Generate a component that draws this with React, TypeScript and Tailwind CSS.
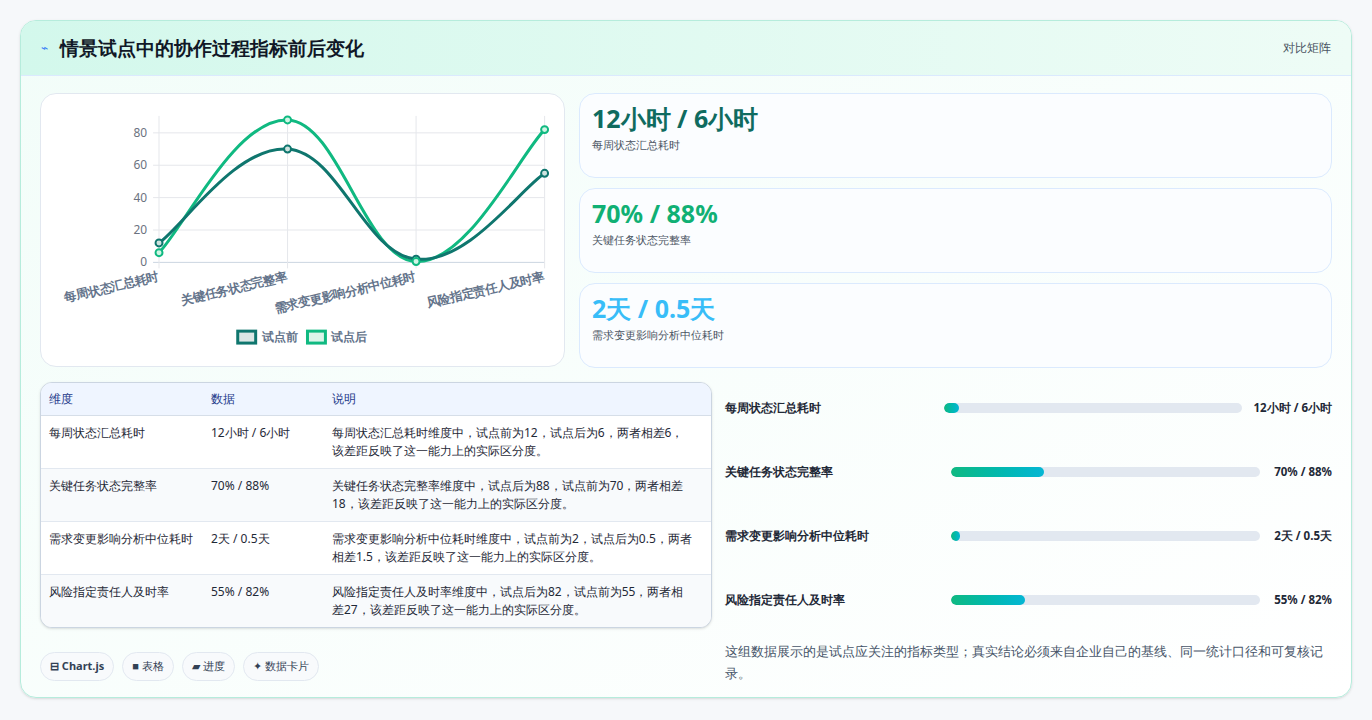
import React from "react";

const xs = [158, 287, 416, 545];
const yOf = (v: number) => 262 - 1.625 * v;

function curve(vals: number[]) {
    const p = vals.map((v, i) => [xs[i], yOf(v)]);
    const t = 0.4;
    let d = `M${p[0][0]},${p[0][1]}`;
    for (let i = 0; i < p.length - 1; i++) {
        const p0 = p[i - 1] || p[i];
        const p1 = p[i];
        const p2 = p[i + 1];
        const p3 = p[i + 2] || p2;
        const c1x = p1[0] + ((p2[0] - p0[0]) * t) / 2;
        const c1y = p1[1] + ((p2[1] - p0[1]) * t) / 2;
        const c2x = p2[0] - ((p3[0] - p1[0]) * t) / 2;
        const c2y = p2[1] - ((p3[1] - p1[1]) * t) / 2;
        d += ` C${c1x},${c1y} ${c2x},${c2y} ${p2[0]},${p2[1]}`;
    }
    return d;
}

const before = [12, 70, 2, 55];
const after = [6, 88, 0.5, 82];
const labels = ["每周状态汇总耗时", "关键任务状态完整率", "需求变更影响分析中位耗时", "风险指定责任人及时率"];

function Chart() {
    return (
        <svg viewBox="40 93 524 273" className="w-full h-full">
            {[0, 20, 40, 60, 80].map((v) => (
                <g key={v}>
                    <line x1={152} x2={545} y1={yOf(v)} y2={yOf(v)} stroke={v === 0 ? "#cbd5e1" : "#e5e7eb"} />
                    <text x={146} y={yOf(v) + 4} textAnchor="end" fontSize="12" fill="#6b7280">{v}</text>
                </g>
            ))}
            {xs.map((x) => (
                <line key={x} x1={x} x2={x} y1={115} y2={268} stroke="#e5e7eb" />
            ))}
            <path d={curve(after)} fill="none" stroke="#10b981" strokeWidth="3" />
            <path d={curve(before)} fill="none" stroke="#0f766e" strokeWidth="3" />
            {before.map((v, i) => (
                <circle key={"b" + i} cx={xs[i]} cy={yOf(v)} r="3.5" fill="#cfe3df" stroke="#0f766e" strokeWidth="2" />
            ))}
            {after.map((v, i) => (
                <circle key={"a" + i} cx={xs[i]} cy={yOf(v)} r="3.5" fill="#d1f5e5" stroke="#10b981" strokeWidth="2" />
            ))}
            {labels.map((l, i) => (
                <text key={l} x={xs[i]} y={280} textAnchor="end" fontSize="12.5" fontWeight="bold" fill="#64748b" transform={`rotate(-13 ${xs[i]} 280)`}>{l}</text>
            ))}
            <rect x={237} y={331} width={18} height={12} fill="#dbe7e5" stroke="#0f766e" strokeWidth="3" />
            <text x={261} y={341} fontSize="12" fontWeight="bold" fill="#64748b">试点前</text>
            <rect x={307} y={331} width={18} height={12} fill="#dcf5ea" stroke="#10b981" strokeWidth="3" />
            <text x={331} y={341} fontSize="12" fontWeight="bold" fill="#64748b">试点后</text>
        </svg>
    );
}

const stats = [
    { v: "12小时 / 6小时", l: "每周状态汇总耗时", c: "text-[#0f6b5f]" },
    { v: "70% / 88%", l: "关键任务状态完整率", c: "text-[#10b074]" },
    { v: "2天 / 0.5天", l: "需求变更影响分析中位耗时", c: "text-[#38bdf8]" },
];

const rows = [
    ["每周状态汇总耗时", "12小时 / 6小时", "每周状态汇总耗时维度中，试点前为12，试点后为6，两者相差6，该差距反映了这一能力上的实际区分度。"],
    ["关键任务状态完整率", "70% / 88%", "关键任务状态完整率维度中，试点后为88，试点前为70，两者相差18，该差距反映了这一能力上的实际区分度。"],
    ["需求变更影响分析中位耗时", "2天 / 0.5天", "需求变更影响分析中位耗时维度中，试点前为2，试点后为0.5，两者相差1.5，该差距反映了这一能力上的实际区分度。"],
    ["风险指定责任人及时率", "55% / 82%", "风险指定责任人及时率维度中，试点后为82，试点前为55，两者相差27，该差距反映了这一能力上的实际区分度。"],
];

const bars = [
    { l: "每周状态汇总耗时", v: "12小时 / 6小时", w: 5 },
    { l: "关键任务状态完整率", v: "70% / 88%", w: 30 },
    { l: "需求变更影响分析中位耗时", v: "2天 / 0.5天", w: 3 },
    { l: "风险指定责任人及时率", v: "55% / 82%", w: 24 },
];

export default function App() {
    return (
        <div className="w-[1372px] h-[720px] bg-[#f6f8fa] p-5 font-['Noto_Sans_CJK_SC','Noto_Sans',sans-serif]">
            <div className="h-[678px] rounded-2xl border border-[#b6ecdc] bg-gradient-to-br from-[#f2fdf9] to-white overflow-hidden shadow-sm">
                <div className="h-[55px] flex items-center justify-between px-5 bg-gradient-to-r from-[#d3f8ec] to-[#eefcf6] border-b border-[#dbeafe]">
                    <div className="flex items-center gap-3">
                        <span className="text-[#3b82f6] text-xs">⌁</span>
                        <h1 className="text-[19px] font-bold text-[#111827]">情景试点中的协作过程指标前后变化</h1>
                    </div>
                    <span className="text-[12px] text-[#4b5563]">对比矩阵</span>
                </div>
                <div className="px-[19px] pt-[17px]">
                    <div className="flex gap-[14px]">
                        <div className="w-[525px] h-[274px] rounded-2xl border border-[#e2e8f0] bg-white">
                            <Chart />
                        </div>
                        <div className="flex-1 flex flex-col gap-[10px]">
                            {stats.map((s) => (
                                <div key={s.l} className="h-[85px] rounded-2xl border border-[#dbeafe] bg-[#fbfdff] px-3 pt-[7px]">
                                    <div className={`text-[25px] font-bold leading-[34px] ${s.c}`}>{s.v}</div>
                                    <div className="text-[11px] text-[#4b5563] mt-[2px]">{s.l}</div>
                                </div>
                            ))}
                        </div>
                    </div>
                    <div className="flex gap-[13px] mt-[14px]">
                        <div className="w-[672px]">
                            <div className="rounded-xl border border-[#cbd5e1] overflow-hidden bg-white text-[12px] shadow-sm">
                                <div className="flex bg-[#eff5ff] text-[#1e3a8a] h-[33px] items-center border-b border-[#d6dee8]">
                                    <div className="w-[170px] pl-2">维度</div>
                                    <div className="w-[121px]">数据</div>
                                    <div className="flex-1">说明</div>
                                </div>
                                {rows.map((r, i) => (
                                    <div key={i} className={`flex py-[8px] leading-[18px] text-[#1f2937] ${i % 2 ? "bg-[#f8fafc]" : "bg-white"} ${i < 3 ? "border-b border-[#e2e8f0]" : ""}`}>
                                        <div className="w-[170px] pl-2 pr-3">{r[0]}</div>
                                        <div className="w-[121px]">{r[1]}</div>
                                        <div className="flex-1 pr-4">{r[2]}</div>
                                    </div>
                                ))}
                            </div>
                            <div className="flex gap-2 mt-[24px] text-[11px] text-[#334155]">
                                <span className="rounded-full border border-[#e2e8f0] bg-[#f8fafc] px-[9px] py-[5px] font-bold">⊟ Chart.js</span>
                                <span className="rounded-full border border-[#e2e8f0] bg-[#f8fafc] px-[9px] py-[5px]">■ 表格</span>
                                <span className="rounded-full border border-[#e2e8f0] bg-[#f8fafc] px-[9px] py-[5px]">▰ 进度</span>
                                <span className="rounded-full border border-[#e2e8f0] bg-[#f8fafc] px-[9px] py-[5px]">✦ 数据卡片</span>
                            </div>
                        </div>
                        <div className="flex-1 -mt-[6px]">
                            {bars.map((b, i) => (
                                <div key={b.l} className="h-[64px] flex items-center text-[12px] font-semibold text-[#1f2937]">
                                    <div className={i === 0 ? "w-[219px]" : "w-[226px]"}>{b.l}</div>
                                    <div className="flex-1 h-[10px] rounded-full bg-[#e2e8f0] overflow-hidden">
                                        <div className="h-full rounded-full bg-gradient-to-r from-[#10b981] to-[#06b6d4]" style={{ width: `${b.w}%` }} />
                                    </div>
                                    <div className={`${i === 0 ? "w-[90px]" : "w-[72px]"} text-right font-bold text-[11.5px]`}>{b.v}</div>
                                </div>
                            ))}
                            <p className="mt-[8px] pr-2 text-[13px] leading-[22px] text-[#475569]">这组数据展示的是试点应关注的指标类型；真实结论必须来自企业自己的基线、同一统计口径和可复核记录。</p>
                        </div>
                    </div>
                </div>
            </div>
        </div>
    );
}
